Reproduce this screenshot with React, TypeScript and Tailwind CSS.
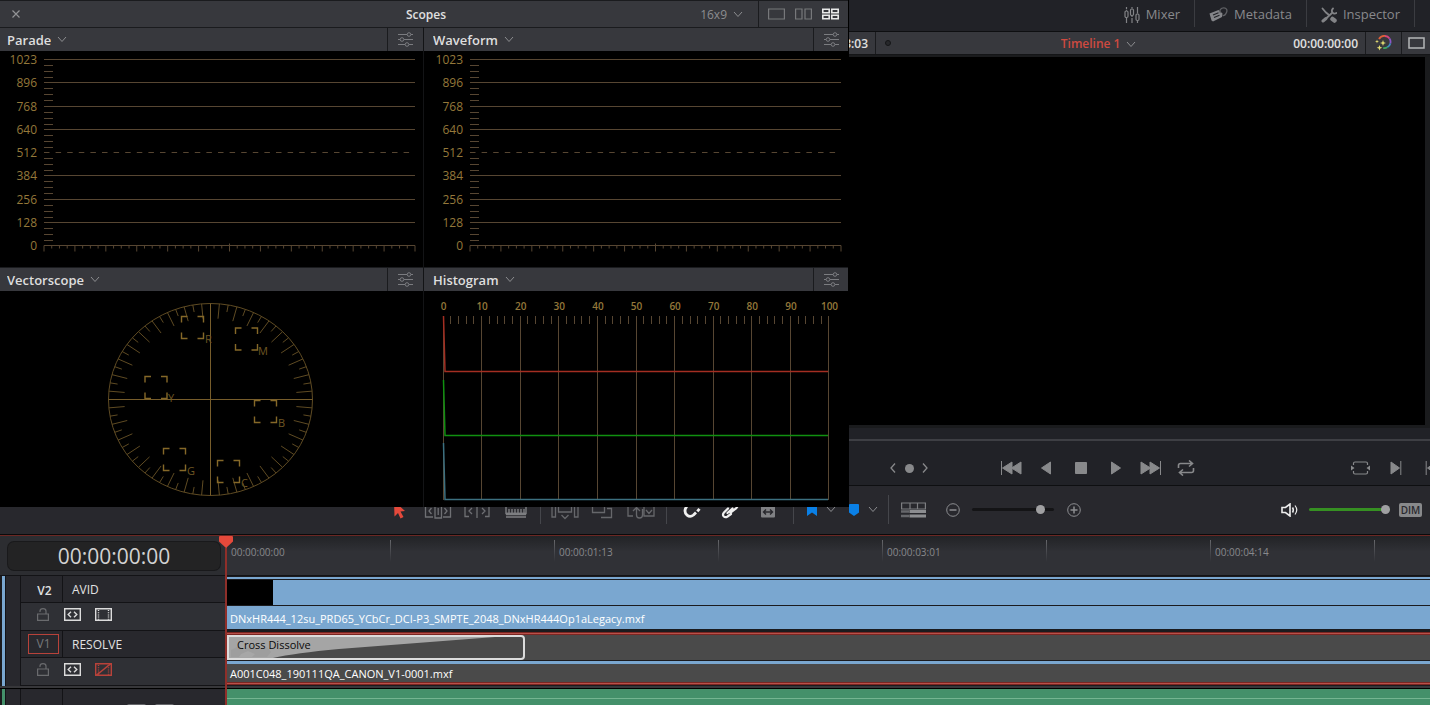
import type { ReactNode } from "react";

const GOLD = "#94783a";
const GRID = "#574632";

/* ---------- Shared bits ---------- */

const Chevron = ({ className = "" }: { className?: string }) => (
    <svg className={className} width="10" height="7" viewBox="0 0 10 7" fill="none" stroke="#8c8d90">
        <path d="M1 1l4 4.5L9 1" />
    </svg>
);

type DropdownProps = { label: string; value: string; className: string };

const Dropdown = ({ label, value, className }: DropdownProps) => (
    <label className="flex items-center gap-1.5">
        <select
            aria-label={label}
            className={`appearance-none bg-transparent field-sizing-content outline-none ${className}`}
        >
            <option>{value}</option>
        </select>
        <Chevron className="pointer-events-none" />
    </label>
);

type IconButtonProps = { label: string; className?: string; children: ReactNode };

const IconButton = ({ label, className = "", children }: IconButtonProps) => (
    <button type="button" aria-label={label} className={`flex shrink-0 items-center justify-center ${className}`}>
        {children}
    </button>
);

/* ---------- Scopes window ---------- */

const SettingsIcon = () => (
    <svg width="17" height="16" viewBox="0 0 17 16" fill="none" stroke="#7b7c80">
        <path d="M1 2.5h9M14 2.5h2M1 7.5h2M7 7.5h9M1 12.5h7M12 12.5h4" />
        <circle cx="12" cy="2.5" r="1.8" />
        <circle cx="5" cy="7.5" r="1.8" />
        <circle cx="10" cy="12.5" r="1.8" />
    </svg>
);

const LEVELS = [1023, 896, 768, 640, 512, 384, 256, 128, 0];

type LevelGraphProps = { left: number; width: number };

const LevelGraph = ({ left, width }: LevelGraphProps) => {
    const right = left + 371;
    const top = 8.5;
    const step = 23.25;
    const bottom = top + step * 8;

    return (
        <svg className="block h-full w-full" viewBox={`0 0 ${width} 216`} stroke={GRID}>
            {LEVELS.map((level, i) => {
                const y = Math.floor(top + i * step) + 0.5;
                return (
                    <g key={level}>
                        <text x={left - 7} y={y + 4.5} textAnchor="end" fontSize="12" fill={GOLD} stroke="none">
                            {level}
                        </text>
                        <path d={`M${left} ${y}H${right}`} strokeDasharray={level === 512 ? "5.5 6.1" : undefined} />
                        {level > 0 &&
                            [1, 2, 3].map((n) => (
                                <path key={n} d={`M${left} ${Math.round(y + n * 5.8) + 0.5}h9`} />
                            ))}
                    </g>
                );
            })}
            {Array.from({ length: 49 }, (_, i) => {
                const x = left + (i * 371) / 48;
                const major = i % 4 === 0;
                return (
                    <path key={i} d={`M${x} ${i === 24 ? bottom - 2 : bottom}V${bottom + (major ? 6 : 3)}`} />
                );
            })}
        </svg>
    );
};

const TARGETS = [
    { name: "R", x: 181.5, y: 25.5, tx: 205, ty: 52 },
    { name: "M", x: 235.5, y: 37, tx: 258, ty: 64 },
    { name: "Y", x: 145, y: 85.5, tx: 168, ty: 111 },
    { name: "B", x: 254.5, y: 109.5, tx: 278, ty: 136 },
    { name: "G", x: 163.5, y: 157.5, tx: 187, ty: 184 },
    { name: "C", x: 217.5, y: 169.5, tx: 241, ty: 196 },
];

const Vectorscope = () => {
    const cx = 210.5;
    const cy = 108.5;
    const rx = 102;
    const ry = 96;

    return (
        <svg className="block h-full w-full" viewBox="0 0 423 216" fill="none" stroke="#5f4b23">
            <ellipse cx={cx} cy={cy} rx={rx} ry={ry} />
            {Array.from({ length: 72 }, (_, i) => {
                const a = (i * 5 * Math.PI) / 180;
                const inner = i % 2 ? 0.845 : 0.925;
                return (
                    <path
                        key={i}
                        d={`M${cx + rx * Math.sin(a)} ${cy - ry * Math.cos(a)}L${cx + rx * inner * Math.sin(a)} ${cy - ry * inner * Math.cos(a)}`}
                    />
                );
            })}
            <path stroke="#775d2b" d={`M${cx} ${cy - ry}V${cy + ry}M${cx - rx} ${cy}H${cx + rx}`} />
            {TARGETS.map((t) => (
                <g key={t.name}>
                    <path
                        stroke="#856828"
                        strokeWidth="1.4"
                        d={`M${t.x} ${t.y + 6}v-6h6m10 0h6v6m0 10v6h-6m-10 0h-6v-6`}
                    />
                    <text x={t.tx} y={t.ty} fontSize="11" fill="#6e5623" stroke="none">
                        {t.name}
                    </text>
                </g>
            ))}
        </svg>
    );
};

const Histogram = () => {
    const x0 = 19;
    const step = 38.6;

    return (
        <svg className="block h-full w-full" viewBox="0 0 424 216" fill="none">
            {Array.from({ length: 51 }, (_, i) => {
                const x = Math.min(Math.floor(x0 + (i * step) / 5), 404) + 0.5;
                return <path key={i} stroke={GRID} d={`M${x} 25V${i % 5 ? 33 : 209}`} />;
            })}
            {Array.from({ length: 11 }, (_, i) => (
                <text key={i} x={x0 + 0.5 + i * step} y="19" textAnchor="middle" fontSize="10" fontWeight="600" fill={GOLD}>
                    {i * 10}
                </text>
            ))}
            <path stroke="#a32e22" strokeWidth="1.5" d="M19.5 25L21 80.5H404" />
            <path stroke="#109010" strokeWidth="1.5" d="M19.5 89L21 144.5H404" />
            <path stroke="#3c7080" strokeWidth="1.5" d="M19.5 152L21 208.5H404" />
        </svg>
    );
};

type ScopePanelProps = { title: string; second?: boolean; children: ReactNode };

const ScopePanel = ({ title, second, children }: ScopePanelProps) => (
    <section className={`flex min-w-0 flex-col ${second ? "border-l border-[#131416]" : ""}`}>
        <header className="flex h-6 items-stretch border-t border-[#1a1b1e] bg-[#37383d]">
            <div className={`flex flex-1 items-center ${second ? "pl-[9px]" : "pl-[7px]"}`}>
                <Dropdown label={`${title} scope`} value={title} className="text-[13px] leading-5 font-semibold text-[#dedede]" />
            </div>
            <IconButton label={`${title} settings`} className={`border-l border-[#1a1b1e] ${second ? "w-[35px]" : "w-9"}`}>
                <SettingsIcon />
            </IconButton>
        </header>
        <div className="h-[216px]">{children}</div>
    </section>
);

const ScopesWindow = () => (
    <div className="absolute top-0 left-0 z-20 w-[849px] border-r border-black bg-black">
        <header className="grid h-[27px] grid-cols-[1fr_auto_1fr] items-stretch border-t border-[#1a1b1e] bg-[#37383d]">
            <IconButton label="Close" className="w-8">
                <svg width="8" height="8" viewBox="0 0 8 8" stroke="#929396" strokeWidth="1.2">
                    <path d="M.5.5l7 7M7.5.5l-7 7" />
                </svg>
            </IconButton>
            <h1 className="self-center pt-px pl-1 text-xs font-semibold text-[#e0e0e0]">Scopes</h1>
            <div className="flex justify-end">
                <div className="flex items-center pt-px pr-[15px]">
                    <Dropdown label="Aspect ratio" value="16x9" className="text-xs text-[#8c8d90]" />
                </div>
                <div className="flex items-center gap-2.5 border-l border-[#1a1b1e] px-[9px]">
                    <IconButton label="One scope">
                        <svg width="17" height="12" viewBox="0 0 17 12" fill="none" stroke="#77787b" strokeWidth="1.2">
                            <path d="M.6 1h15.8v10H.6z" />
                        </svg>
                    </IconButton>
                    <IconButton label="Two scopes">
                        <svg width="17" height="12" viewBox="0 0 17 12" fill="none" stroke="#77787b" strokeWidth="1.2">
                            <path d="M.6 1H7v10H.6zM10 1h6.4v10H10z" />
                        </svg>
                    </IconButton>
                    <IconButton label="Four scopes">
                        <svg width="17" height="12" viewBox="0 0 17 12" fill="none" stroke="#e8e8e8" strokeWidth="1.6">
                            <path d="M.8 1.3h6.4v3.4H.8zM9.8 1.3h6.4v3.4H9.8zM.8 7.3h6.4v3.4H.8zM9.8 7.3h6.4v3.4H9.8z" />
                        </svg>
                    </IconButton>
                </div>
            </div>
        </header>
        <div className="grid grid-cols-[423fr_425fr]">
            <ScopePanel title="Parade">
                <LevelGraph left={44} width={423} />
            </ScopePanel>
            <ScopePanel title="Waveform" second>
                <LevelGraph left={46} width={424} />
            </ScopePanel>
            <ScopePanel title="Vectorscope">
                <Vectorscope />
            </ScopePanel>
            <ScopePanel title="Histogram" second>
                <Histogram />
            </ScopePanel>
        </div>
    </div>
);

/* ---------- Top bar ---------- */

const MixerIcon = () => (
    <svg width="16" height="16" viewBox="0 0 16 16" fill="none" stroke="#828386" strokeWidth="1.2">
        <path d="M2.5 0v2M2.5 2.8v1M2.5 11v5M8 0v1.5M8 9v1M8 11v5M13.5 0v6.5M13.5 14v2" />
        <rect x="1" y="4" width="3" height="6.5" rx="1.2" />
        <rect x="6.5" y="2" width="3" height="6.5" rx="1.2" />
        <rect x="12" y="7" width="3" height="6.5" rx="1.2" />
    </svg>
);

const MetadataIcon = () => (
    <svg width="19" height="15" viewBox="0 0 19 15" fill="none">
        <path d="M.5 6.500L9.500 3l4 3.500-.5 3.500L4 14.500 2.500 13.500z" fill="#85868a" />
        <path d="M4 8l5.500-2.200M5 10.500l5.500-2.200" stroke="#212227" strokeWidth="1.2" />
        <path d="M11.500 6C9.800 3.500 12 .8 14.800.8s3.700 2.400 2.700 4.700-2.500 3.500-4 3" stroke="#5f6064" strokeWidth="1.3" />
    </svg>
);

const InspectorIcon = () => (
    <svg width="16" height="16" viewBox="0 0 16 16" fill="none" stroke="#828386" strokeLinecap="round">
        <path d="M1.500 1.500l3.500 4 3 2.500" strokeWidth="1.8" />
        <path d="M11.500 12l2 1.500" strokeWidth="4.5" />
        <path d="M2 14l3-2.500" strokeWidth="3" />
        <path d="M5 11.500l6-5.500" strokeWidth="1.8" />
        <path d="M12 1.500q-2 2-.5 4t4 .5" strokeWidth="1.8" />
    </svg>
);

const TABS = [
    { name: "Mixer", icon: <MixerIcon /> },
    { name: "Metadata", icon: <MetadataIcon /> },
    { name: "Inspector", icon: <InspectorIcon /> },
];

const TopBar = () => (
    <nav className="flex h-8 items-center justify-end border-b border-[#0e0f11] bg-[#212227] pr-[15px]">
        {TABS.map((tab) => (
            <button
                key={tab.name}
                type="button"
                className="-mt-1 flex h-[27px] items-center gap-1.5 border-r border-[#3b3c41] px-3.5 pt-0.5 text-[13px] text-[#88898c]"
            >
                {tab.icon}
                {tab.name}
            </button>
        ))}
    </nav>
);

/* ---------- Viewer ---------- */

const ViewerHeader = () => (
    <header className="flex h-[23px] items-stretch border-b border-[#141517] bg-[#37383d] text-xs font-semibold text-[#e0e0e0]">
        <div className="flex w-[876px] shrink-0 items-center justify-end border-r border-[#1a1b1e] pt-0.5 pr-[7px]">3:03</div>
        <div className="flex w-6 items-center justify-center">
            <span className="size-1.5 rounded-full border border-[#141517] bg-[#27282b]" />
        </div>
        <div className="flex flex-1 items-center justify-center pt-0.5 pl-1">
            <Dropdown label="Timeline" value="Timeline 1" className="text-xs text-[#cf4a40]" />
        </div>
        <div className="flex items-center pt-0.5 pr-[7px]">00:00:00:00</div>
        <IconButton label="Bypass grades" className="w-9 border-l border-[#1a1b1e]">
            <svg width="17" height="16" viewBox="0 0 17 16" fill="none" strokeWidth="1.8">
                <path d="M4 4a6 6 0 0 1 6-3" stroke="#e0603a" />
                <path d="M10 1a6 6 0 0 1 4.500 2.500" stroke="#d8457c" />
                <path d="M14.500 3.500a6 6 0 0 1 .8 5" stroke="#8a56c8" />
                <path d="M15.300 8.500a6 6 0 0 1-3 3.800" stroke="#3d8fc0" />
                <path d="M12.300 12.300a6 6 0 0 1-4 .7" stroke="#3fa866" />
                <path
                    d="M8 5l.8 2.200 2.200.8-2.200.8-.8 2.200-.8-2.200-2.200-.8 2.200-.8zM2 4.500l.5 1.500 1.500.5-1.500.5L2 8.500 1.500 7 0 6.500 1.500 6zM4.500 10l.8 2 2 .8-2 .8-.8 2-.8-2-2-.8 2-.8z"
                    fill="#e3dc72"
                />
            </svg>
        </IconButton>
        <IconButton label="Single viewer" className="w-[29px] border-l border-[#1a1b1e]">
            <svg width="17" height="12" viewBox="0 0 17 12" fill="none" stroke="#b5b6b8" strokeWidth="1.5">
                <path d="M1 1h15v10H1z" />
            </svg>
        </IconButton>
    </header>
);

const TRANSPORT = [
    { name: "First frame", path: "M1.500 0v14M12 1v12L2.500 7zM21 1v12L11.500 7z" },
    { name: "Play reverse", path: "M15.500 1v12L6.500 7z" },
    { name: "Stop", path: "M5.500 1.500h11v11h-11z" },
    { name: "Play", path: "M6.500 1v12L15.500 7z" },
    { name: "Last frame", path: "M20.500 0v14M10 1v12L19.500 7zM1 1v12L10.500 7z" },
];

const Transport = () => (
    <div className="flex h-[58px] flex-col border-b border-[#0e0f11] bg-[#212227]">
        <div className="mt-[11px] h-0.5 shrink-0 bg-[#3e3f44]" />
        <div className="flex flex-1 items-center overflow-hidden pt-2.5 pl-[885px]">
            <IconButton label="Previous keyframe" className="w-4">
                <svg width="6" height="10" viewBox="0 0 6 10" fill="none" stroke="#88898b" strokeWidth="1.3">
                    <path d="M5 .5L1 5l4 4.500" />
                </svg>
            </IconButton>
            <IconButton label="Keyframe" className="w-4">
                <span className="size-[9px] rounded-full bg-[#88898b]" />
            </IconButton>
            <IconButton label="Next keyframe" className="w-4">
                <svg width="6" height="10" viewBox="0 0 6 10" fill="none" stroke="#88898b" strokeWidth="1.3">
                    <path d="M1 .5L5 5 1 9.500" />
                </svg>
            </IconButton>
            <div className="ml-[60px] flex">
                {TRANSPORT.map((item) => (
                    <IconButton key={item.name} label={item.name} className="w-[35px]">
                        <svg width="22" height="14" viewBox="0 0 22 14" fill="#88898b" stroke="#88898b" strokeWidth="1">
                            <path d={item.path} />
                        </svg>
                    </IconButton>
                ))}
                <IconButton label="Loop" className="w-[35px]">
                    <svg width="18" height="16" viewBox="0 0 18 16" fill="none" stroke="#88898b" strokeWidth="1.6">
                        <path d="M1.500 8V5.500q0-2 2-2H15M12 .5l3.500 3L12 6.500M16.500 8v2.500q0 2-2 2H3M6 9.500l-3.500 3 3.500 3" />
                    </svg>
                </IconButton>
            </div>
            <div className="-mr-[18px] ml-auto flex shrink-0">
                <IconButton label="Match frame" className="w-[35px]">
                    <svg width="19" height="14" viewBox="0 0 19 14" fill="none" stroke="#88898b" strokeWidth="1.2">
                        <path d="M2.500 4V2.500q0-1.500 1.500-1.500h11q1.500 0 1.500 1.500V4M2.500 10v1.500Q2.500 13 4 13h11q1.500 0 1.500-1.500V10" />
                        <path d="M0 4.500L3.500 7 0 9.500zM19 4.500L15.500 7 19 9.500z" fill="#88898b" stroke="none" />
                    </svg>
                </IconButton>
                <IconButton label="Next clip" className="w-[35px]">
                    <svg width="12" height="14" viewBox="0 0 12 14" fill="#88898b" stroke="#88898b">
                        <path d="M1 1v12l8.500-6zM10.800 0v14" />
                    </svg>
                </IconButton>
                <IconButton label="Previous clip" className="w-[35px]">
                    <svg width="12" height="14" viewBox="0 0 12 14" fill="#88898b" stroke="#88898b">
                        <path d="M11 1v12L2.500 7zM1.200 0v14" />
                    </svg>
                </IconButton>
            </div>
        </div>
    </div>
);

/* ---------- Edit toolbar ---------- */

const TRIM_TOOLS = [
    {
        name: "Trim edit",
        path: "M9 17H1.500V3H9M19 17h7.500V3H19M7.500 8L5 11l2.500 3M20.500 8l2.500 3-2.500 3M11 2.500h6.500v15.500H11zM14.200 8v7",
    },
    {
        name: "Dynamic trim",
        path: "M6 16.500H2V3.500h4M22 16.500h4V3.500h-4M9 8l-3 3 3 3M19 8l3 3-3 3M14 2v16",
    },
];

const INSERT_TOOLS = [
    {
        name: "Insert clip",
        path: "M1 3h3.500v14H1zM23.500 3H27v14h-3.500zM7.500 4v8h13V4M10.500 15l3.500 3.500 3.500-3.500",
    },
    { name: "Overwrite clip", path: "M3.500 4h12v8.500h-12zM12 17.500h10.500V8.500H18" },
    {
        name: "Replace clip",
        path: "M1 3v13h5M6 11l3.500-3.500L13 11M9.500 8v7q0 3 3 3t3-3V9M17 5v11h10V4M19 10l3 3.500L25 10",
    },
];

const Separator = ({ className }: { className: string }) => (
    <span className={`h-[29px] w-px shrink-0 bg-[#45464b] ${className}`} />
);

const RANGE =
    "h-[11px] appearance-none bg-transparent outline-none [&::-webkit-slider-runnable-track]:h-[3px] [&::-webkit-slider-runnable-track]:rounded-full [&::-webkit-slider-thumb]:-mt-[3px] [&::-webkit-slider-thumb]:size-[9px] [&::-webkit-slider-thumb]:appearance-none [&::-webkit-slider-thumb]:rounded-full [&::-webkit-slider-thumb]:bg-[#a0a0a2]";

const Toolbar = () => (
    <div className="flex h-[49px] items-center border-b border-[#0a0a0b] bg-[#28282d] pr-2 pb-px pl-[379px]">
        <IconButton label="Selection" className="w-[39px]">
            <svg width="20" height="20" viewBox="0 0 20 20" fill="#e5493b">
                <path d="M5 1l11 10-4.500.5 3 5.500-3 1.500L9 13l-3.500 3.500z" />
            </svg>
        </IconButton>
        {TRIM_TOOLS.map((tool) => (
            <IconButton key={tool.name} label={tool.name} className="w-[39px]">
                <svg width="28" height="20" viewBox="0 0 28 20" fill="none" stroke="#6f7074" strokeWidth="1.3">
                    <path d={tool.path} />
                </svg>
            </IconButton>
        ))}
        <IconButton label="Razor" className="w-[39px]">
            <svg width="22" height="20" viewBox="0 0 22 20" fill="none" stroke="#7d7e81" strokeWidth="1.4">
                <path d="M1 4v9.500h20V4zM4 9v4M7 9v4M10 9v4M13 9v4M16 9v4M19 9v4M1 17h20" />
                <path d="M1 14h20" strokeWidth="2.5" />
            </svg>
        </IconButton>
        <Separator className="mx-[5px]" />
        {INSERT_TOOLS.map((tool) => (
            <IconButton key={tool.name} label={tool.name} className="w-[38px]">
                <svg width="28" height="20" viewBox="0 0 28 20" fill="none" stroke="#66676b" strokeWidth="1.3">
                    <path d={tool.path} />
                </svg>
            </IconButton>
        ))}
        <Separator className="mx-1.5" />
        <IconButton label="Snapping" className="w-[38px]">
            <svg width="20" height="20" viewBox="0 0 20 20" fill="none" stroke="#f0f0f0" strokeWidth="2.8">
                <path d="M6 4L3.500 8.500C1.500 14 7 18.500 11.500 15l2.500-2.500" />
                <path d="M15.300 11.300l2.200-2.500" />
            </svg>
        </IconButton>
        <IconButton label="Linked selection" className="w-[38px]">
            <svg width="20" height="20" viewBox="0 0 20 20" fill="none" stroke="#f0f0f0" strokeWidth="2.2" strokeLinecap="round">
                <path d="M8 8.500L4 12.500c-2.500 3 .5 6 3.500 4L11 14" />
                <path d="M10.500 12.500L16 8.500c3.500-3.500-.5-7-3.500-4.500L9 6M7.500 13l5-4.500" />
            </svg>
        </IconButton>
        <IconButton label="Position lock" className="w-[38px]">
            <svg width="16" height="20" viewBox="0 0 16 20" fill="none">
                <path d="M4 7V5q0-3 4-3t4 3v2" stroke="#808184" strokeWidth="2" />
                <rect x="1" y="6" width="14" height="11.5" rx="1" fill="#808184" />
                <path d="M3.500 12h9M6 9.500L3.500 12 6 14.500M10 9.500l2.500 2.500-2.500 2.500" stroke="#28282d" strokeWidth="1.4" />
            </svg>
        </IconButton>
        <Separator className="mx-1.5" />
        <IconButton label="Flag" className="w-6">
            <svg width="10" height="12" viewBox="0 0 10 12" fill="#0a80e6">
                <path d="M0 0h10v12L5 8.500 0 12z" />
            </svg>
        </IconButton>
        <IconButton label="Flag colours" className="w-3.5">
            <Chevron />
        </IconButton>
        <IconButton label="Marker" className="ml-1 w-6">
            <svg width="10" height="12" viewBox="0 0 10 12" fill="#0a80e6">
                <path d="M1 0h8q1 0 1 1v7.500L5 12 0 8.500V1q0-1 1-1z" />
            </svg>
        </IconButton>
        <IconButton label="Marker colours" className="w-3.5">
            <Chevron />
        </IconButton>
        <Separator className="ml-2" />
        <IconButton label="Timeline view options" className="ml-3">
            <svg width="25" height="16" viewBox="0 0 25 16" fill="none" stroke="#7d7e81" strokeWidth="1.2">
                <path d="M.6 1h23.800v6H.6zM9 1v6M16.500 1v6" />
                <path d="M0 9.500h8M0 14h8" strokeWidth="2.5" stroke="#66676b" />
                <path d="M8.500 9.500H25M8.500 14H25" strokeWidth="3" stroke="#8c8d90" />
            </svg>
        </IconButton>
        <IconButton label="Zoom out" className="ml-5">
            <svg width="14" height="14" viewBox="0 0 14 14" fill="none" stroke="#8c8d90">
                <circle cx="7" cy="7" r="6.3" />
                <path d="M3.500 7h7" strokeWidth="1.5" />
            </svg>
        </IconButton>
        <input
            type="range"
            aria-label="Timeline zoom"
            defaultValue={87}
            className={`ml-3 w-[82px] [&::-webkit-slider-runnable-track]:bg-[#141416] ${RANGE}`}
        />
        <IconButton label="Zoom in" className="ml-[13px]">
            <svg width="14" height="14" viewBox="0 0 14 14" fill="none" stroke="#8c8d90">
                <circle cx="7" cy="7" r="6.3" />
                <path d="M3.500 7h7M7 3.500v7" strokeWidth="1.5" />
            </svg>
        </IconButton>
        <IconButton label="Mute" className="ml-auto">
            <svg width="18" height="14" viewBox="0 0 18 14" fill="none" stroke="#ededed" strokeWidth="1.6">
                <path d="M1 4.500h3.500L9 1v12L4.500 9.500H1z" />
                <path d="M11.500 4.500q1.500 2.500 0 5" />
                <path d="M14 2.500q3.500 4.500 0 9" strokeWidth="1.2" />
            </svg>
        </IconButton>
        <input
            type="range"
            aria-label="Volume"
            defaultValue={100}
            className={`ml-2.5 w-[81px] [&::-webkit-slider-runnable-track]:bg-[#369022] ${RANGE}`}
        />
        <button type="button" className="ml-[9px] h-3.5 w-[23px] rounded-xs bg-[#88898b] text-[10px] leading-[14px] font-semibold text-[#28282d]">
            DIM
        </button>
    </div>
);

/* ---------- Timeline ---------- */

const LockIcon = () => (
    <svg width="12" height="13" viewBox="0 0 12 13" fill="none" stroke="#6a6b6e" strokeWidth="1.2">
        <path d="M.6 6h10.800v6.400H.6zM3 4V3q0-2.400 3-2.400T9 3v3" />
    </svg>
);

const AutoSelectIcon = () => (
    <svg width="17" height="13" viewBox="0 0 17 13" fill="none" stroke="#dcdcdc" strokeWidth="1.4">
        <path d="M.7.7h15.600v11.600H.7zM7 3.800L4.200 6.500 7 9.200M10 3.800l2.800 2.700L10 9.200" />
    </svg>
);

const FilmIcon = ({ off }: { off?: boolean }) => (
    <svg width="17" height="13" viewBox="0 0 17 13" fill="none" stroke={off ? "#b8423a" : "#dcdcdc"} strokeWidth="1.4">
        <path d="M.7.7h15.600v11.600H.7z" />
        <path d="M3.500 2v10M13.500 2v10" strokeDasharray="1 1.2" />
        {off && <path d="M1 12.500L16 .5" strokeWidth="1.5" />}
    </svg>
);

type TrackHeadProps = { id: string; name: string; source?: boolean; off?: boolean };

const TrackHead = ({ id, name, source, off }: TrackHeadProps) => (
    <div className="flex h-[55px] pl-0.5">
        <span className="w-[3px] bg-[#7aa7d0]" />
        <span className="w-4 border-x border-[#131316] bg-[#28282d]" />
        <div className="flex-1">
            <div className="flex h-[27px] border-b border-[#131316] bg-[#28282d] text-xs text-[#e2e2e2]">
                <div className="flex w-[42px] items-center justify-center border-r border-[#131316] pl-1">
                    {source ? (
                        <button type="button" className="h-5 w-[31px] border border-[#b8423a] text-xs leading-4 text-[#77787b]">
                            {id}
                        </button>
                    ) : (
                        <span className="pt-1 pl-0.5 font-semibold">{id}</span>
                    )}
                </div>
                <span className="flex items-center pt-0.5 pl-[9px] font-medium">{name}</span>
            </div>
            <div className="flex h-7 items-center border-b border-[#131316] bg-[#2f3035] pb-1 pl-4">
                <IconButton label={`Lock ${id}`}>
                    <LockIcon />
                </IconButton>
                <IconButton label={`Auto select ${id}`} className="ml-[15px]">
                    <AutoSelectIcon />
                </IconButton>
                <IconButton label={`Enable ${id}`} className="ml-3.5">
                    <FilmIcon off={off} />
                </IconButton>
            </div>
        </div>
    </div>
);

const LABELS = ["00:00:00:00", "", "00:00:01:13", "", "00:00:03:01", "", "00:00:04:14", ""];

const Ruler = () => (
    <div className="flex h-10 overflow-hidden border-b border-[#131316] bg-linear-to-b from-[#222326] to-[#303136] to-40% pt-1">
        {LABELS.map((label, i) => (
            <div key={i} className="flex w-[164px] shrink-0 text-[10px] leading-6 text-[#88898c]">
                <span className="h-[22px] w-px bg-linear-to-b from-[#66676b] to-[#303136]" />
                <span className="pl-1">{label}</span>
            </div>
        ))}
    </div>
);

const RedEdge = () => <div className="h-[3px] shrink-0 border-y border-[#7b2622] bg-[#b8514a]" />;

const Transition = () => (
    <div className="relative h-[25px] w-[298px] overflow-hidden rounded-r-sm border-2 border-[#dcdcdc] bg-[#4a4a4a]">
        <svg className="absolute inset-0 h-full w-full" viewBox="0 0 294 21" preserveAspectRatio="none">
            <path d="M0 0H266L110 12Q66 16 44 21H0z" fill="#a5a5a5" />
            <path d="M2 13l8-4 5 4 9-5 6 5 8-3 4 5-4 5H2z" fill="#999" opacity=".6" />
            <path d="M12 17l7-3 7 3-3 3H10z" fill="#b0b0b0" opacity=".5" />
        </svg>
        <span className="relative block pl-2 text-[11px] leading-4 font-medium text-[#0a0a0a]">Cross Dissolve</span>
    </div>
);

const Timeline = () => (
    <main className="grid grid-cols-[226px_1fr] overflow-hidden border-t border-[#6b2723] bg-[#1b1b1e]">
        <div>
            <div className="h-10 border-b border-[#131316] bg-[#2c2d31] pt-1.5 pr-1.5 pl-2">
                <div className="h-7 rounded-md bg-[#232324] text-center text-[21px] leading-7 text-[#d2d2d2] ring-1 ring-[#19191b]">
                    00:00:00:00
                </div>
            </div>
            <TrackHead id="V2" name="AVID" />
            <TrackHead id="V1" name="RESOLVE" source off />
            <div className="h-[3px] border-b border-black bg-[#37373a]" />
            <div className="flex h-4 overflow-hidden pl-0.5">
                <span className="w-[3px] bg-[#44906a]" />
                <span className="w-4 border-x border-[#131316] bg-[#28282d]" />
                <div className="flex flex-1 bg-[#28282d]">
                    <span className="w-[42px] border-r border-[#131316]" />
                    <span className="mt-[15px] ml-16 h-4 w-[19px] rounded-xs bg-[#66676b]" />
                    <span className="mt-[15px] ml-[9px] h-4 w-[19px] rounded-xs bg-[#66676b]" />
                </div>
            </div>
        </div>

        <div className="relative min-w-0">
            <Ruler />
            {/* V2 clip */}
            <div className="flex h-[55px] flex-col gap-px py-px pl-px text-[11px] text-white">
                <div className="h-0.5 bg-[#7aa7d0]" />
                <div className="h-[25px] bg-[#7aa7d0]">
                    <div className="h-full w-[46px] bg-black" />
                </div>
                <div className="h-[23px] truncate bg-[#7aa7d0] pl-[3px] leading-[26px]">
                    DNxHR444_12su_PRD65_YCbCr_DCI-P3_SMPTE_2048_DNxHR444Op1aLegacy.mxf
                </div>
            </div>
            {/* V1 clip */}
            <div className="flex h-[55px] flex-col py-px pl-px text-[11px] text-white">
                <RedEdge />
                <div className="h-[26px] border-b border-[#1b1b1e] bg-[#4a4a4a]">
                    <Transition />
                </div>
                <div className="h-[3px] bg-[#7aa7d0]" />
                <div className="h-[18px] truncate bg-[#4a4a4a] pl-[3px] leading-5">A001C048_190111QA_CANON_V1-0001.mxf</div>
                <RedEdge />
            </div>
            <div className="h-[3px] border-b border-black bg-[#37373a]" />
            <div className="ml-px h-4 bg-[#44906a] pt-[9px]">
                <div className="h-px bg-[#74b591]" />
            </div>

            {/* Playhead */}
            <div className="absolute inset-y-0 -left-[7px] flex w-3.5 flex-col items-center">
                <svg className="shrink-0" width="14" height="12" viewBox="0 0 14 12" fill="#e5493b">
                    <path d="M1 0h12q1 0 1 1v4.500L7 12 0 5.500V1q0-1 1-1z" />
                </svg>
                <span className="w-0.5 flex-1 bg-[#8f2f2a]" />
            </div>
        </div>
    </main>
);

const App = () => {
    return (
        <div className="relative flex h-screen flex-col overflow-hidden bg-[#1b1b1e] font-['Open_Sans','Noto_Sans',sans-serif]">
            <TopBar />
            <ViewerHeader />
            <div className="flex-1 bg-[#1a1b1d] pt-0.5 pr-[5px] pb-[3px]">
                <div className="h-full bg-black" />
            </div>
            <Transport />
            <Toolbar />
            <Timeline />
            <ScopesWindow />
        </div>
    );
};

export default App;
